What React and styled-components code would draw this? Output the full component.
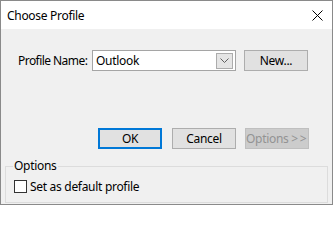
import React from 'react';
import styled, { createGlobalStyle } from 'styled-components';

const GlobalStyle = createGlobalStyle`
  html, body {
    margin: 0;
    padding: 0;
    background: #ffffff;
  }
  body {
    font-family: "Segoe UI", "Noto Sans", "Liberation Sans", sans-serif;
    font-size: 12px;
    letter-spacing: -0.3px;
    color: #000;
  }
`;

const Window = styled.div`
  box-sizing: border-box;
  width: 333px;
  height: 205px;
  border: 1px solid #8a8a8a;
  background: #f0f0f0;
  display: flex;
  flex-direction: column;
`;

const TitleBar = styled.div`
  height: 28px;
  background: #ffffff;
  display: flex;
  align-items: center;
  justify-content: space-between;
  padding: 0 9px 0 6px;
  flex: none;
`;

const Title = styled.span`
  font-size: 12px;
  line-height: 16px;
  margin-top: 1px;
`;

const Body = styled.div`
  flex: 1;
  display: flex;
  flex-direction: column;
  padding: 0 4px 1px 4px;
`;

const ProfileRow = styled.div`
  display: flex;
  align-items: center;
  margin: 21px 0 0 13px;
  height: 21px;
`;

const FieldLabel = styled.label`
  width: 74px;
  flex: none;
  line-height: 16px;
  letter-spacing: -0.55px;
  white-space: nowrap;
`;

const Combo = styled.div`
  box-sizing: border-box;
  width: 144px;
  height: 21px;
  background: #fff;
  border: 1px solid #a5a5a5;
  display: flex;
  align-items: center;
  justify-content: space-between;
  padding: 0 2px 0 3px;
`;

const ComboValue = styled.span`
  line-height: 16px;
`;

const DropButton = styled.span`
  box-sizing: border-box;
  width: 17px;
  height: 16px;
  background: #e5e5e5;
  border: 1px solid #acacac;
  display: flex;
  align-items: center;
  justify-content: center;
`;

const Button = styled.button`
  box-sizing: border-box;
  width: 64px;
  height: 21px;
  margin: 0;
  margin-left: ${p => p.gap || 0}px;
  padding: 0;
  font: inherit;
  font-size: 12px;
  letter-spacing: -0.3px;
  white-space: nowrap;
  color: ${p => (p.disabled ? '#939393' : '#000')};
  background: ${p => (p.disabled ? '#cccccc' : '#e1e1e1')};
  border: ${p => (p.primary ? '2px solid #0078d7' : `1px solid ${p.disabled ? '#bfbfbf' : '#adadad'}`)};
  border-radius: 0;
`;

const Arrows = styled.span`
  letter-spacing: 1.5px;
`;

const ButtonRow = styled.div`
  display: flex;
  justify-content: flex-end;
  margin: 57px 19px 0 0;
  height: 21px;
`;

const GroupBox = styled.fieldset`
  box-sizing: border-box;
  margin: 9px 0 0 0;
  height: 45px;
  border: 1px solid #dcdcdc;
  padding: 6px 8px 0 8px;
  min-width: 0;
`;

const GroupLegend = styled.legend`
  padding: 0 1px;
  margin-left: -1px;
  line-height: 16px;
`;

const CheckRow = styled.label`
  display: flex;
  align-items: center;
  height: 13px;
`;

const CheckBox = styled.span`
  box-sizing: border-box;
  width: 13px;
  height: 13px;
  background: #fff;
  border: 1px solid #333333;
  flex: none;
  margin-right: 3px;
`;

const CheckText = styled.span`
  line-height: 16px;
`;

const CloseIcon = () => (
  <svg width="11" height="11" viewBox="0 0 11 11">
    <path d="M0.5 0.5 L10.5 10.5 M10.5 0.5 L0.5 10.5" stroke="#000" strokeWidth="1" fill="none" />
  </svg>
);

const Chevron = () => (
  <svg width="9" height="5" viewBox="0 0 9 5">
    <path d="M0.5 0.5 L4.5 4.5 L8.5 0.5" stroke="#606060" strokeWidth="1" fill="none" />
  </svg>
);

export default function App() {
  return (
    <>
      <GlobalStyle />
      <Window>
        <TitleBar>
          <Title>Choose Profile</Title>
          <CloseIcon />
        </TitleBar>
        <Body>
          <ProfileRow>
            <FieldLabel>Profile Name:</FieldLabel>
            <Combo>
              <ComboValue>Outlook</ComboValue>
              <DropButton><Chevron /></DropButton>
            </Combo>
            <Button gap={8}>New...</Button>
          </ProfileRow>
          <ButtonRow>
            <Button primary>OK</Button>
            <Button gap={10}>Cancel</Button>
            <Button gap={9} disabled>Options <Arrows>&gt;&gt;</Arrows></Button>
          </ButtonRow>
          <GroupBox>
            <GroupLegend>Options</GroupLegend>
            <CheckRow>
              <CheckBox />
              <CheckText>Set as default profile</CheckText>
            </CheckRow>
          </GroupBox>
        </Body>
      </Window>
    </>
  );
}
